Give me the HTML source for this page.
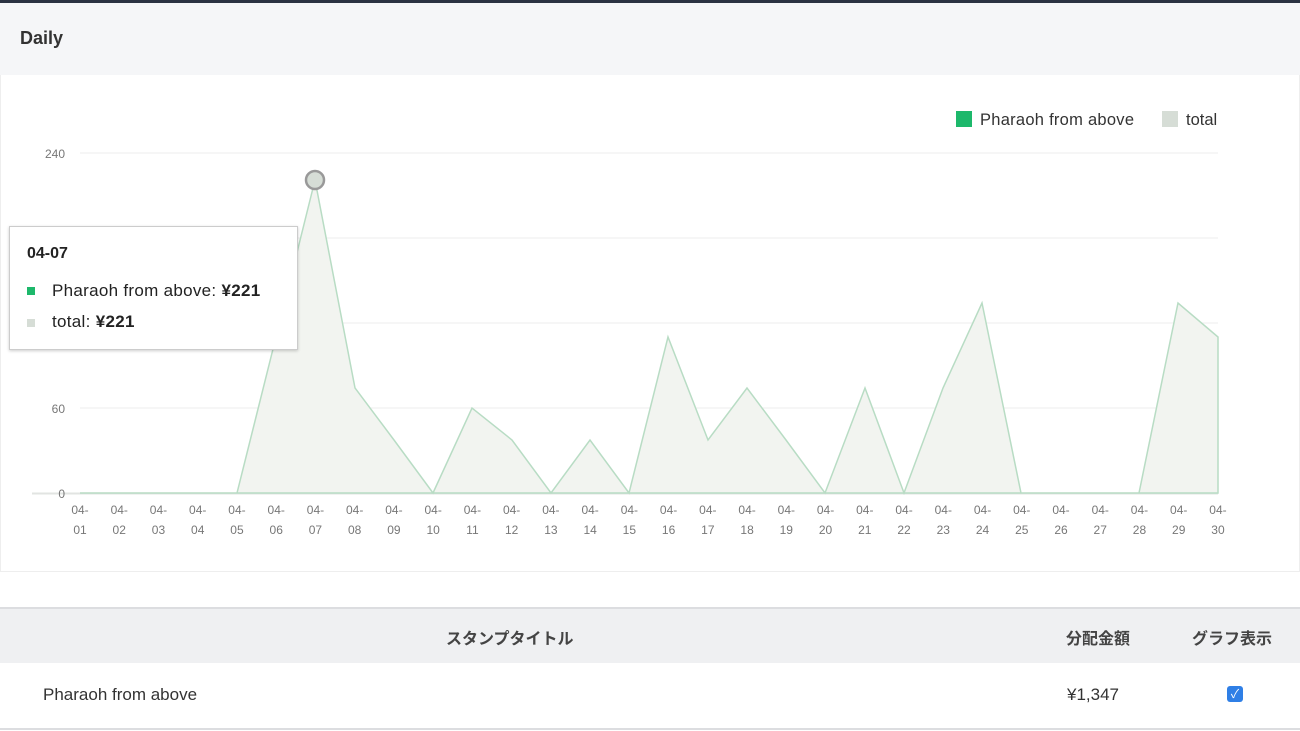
<!DOCTYPE html>
<html><head><meta charset="utf-8"><style>
body{margin:0;width:1300px;height:731px;overflow:hidden;background:#fff;font-family:"Liberation Sans","Noto Sans CJK JP",sans-serif;position:relative}
.top{position:absolute;left:0;top:0;width:1300px;height:3px;background:#2b3242}
.hdr{position:absolute;left:0;top:3px;width:1300px;height:72px;background:#f5f6f8}
.hdr span{position:absolute;left:20px;top:25px;font-size:18px;font-weight:bold;color:#333}
.panel{position:absolute;left:0;top:75px;width:1298px;height:496px;border:1px solid #eee;border-top:none;background:#fff}
.tip{position:absolute;left:9px;top:226px;width:287px;height:122px;background:#fff;border:1px solid #ccc;box-shadow:0 1px 3px rgba(0,0,0,.2);font-size:17px;color:#222}
.th{position:absolute;left:0;top:607px;width:1300px;height:54px;background:#eff0f2;border-top:2px solid #dcdde0}
.row{position:absolute;left:0;top:662px;width:1300px;height:66px;border-bottom:2px solid #dcdde0}
</style></head><body>
<div class="top"></div>
<div class="hdr"><span>Daily</span></div>
<div class="panel"></div>
<svg style="position:absolute;left:0;top:0" width="1300" height="600" font-family="Liberation Sans, sans-serif">
<g stroke="#eee" stroke-width="1">
<line x1="80" y1="153" x2="1218" y2="153"/><line x1="80" y1="238" x2="1218" y2="238"/><line x1="80" y1="323" x2="1218" y2="323"/><line x1="80" y1="408" x2="1218" y2="408"/>
</g>
<line x1="32" y1="493.5" x2="1218" y2="493.5" stroke="#e2e4e2" stroke-width="2"/>
<g font-size="12" fill="#777" text-anchor="end">
<text x="65" y="158">240</text><text x="65" y="413">60</text><text x="65" y="498">0</text>
</g>
<polygon fill="#f2f4f0" stroke="#b8dcc4" stroke-width="1.5" points="80,493 119,493 159,493 198,493 237,493 276,337 315,180 355,388 394,440 433,493 472,408 512,440 551,493 590,440 629,493 668,337 708,440 747,388 786,440 825,493 865,388 904,493 943,388 982,303 1021,493 1061,493 1100,493 1139,493 1178,303 1218,337 1218,493"/>
<circle cx="315" cy="180" r="9" fill="#d6ddd6" stroke="#999" stroke-width="2.5"/>
<g font-size="12" fill="#777" text-anchor="middle" id="xl"></g>
<rect x="956" y="111" width="16" height="16" fill="#1db86b"/>
<text x="980" y="125" font-size="16.5" fill="#333" textLength="154">Pharaoh from above</text>
<rect x="1162" y="111" width="16" height="16" fill="#d6ddd6"/>
<text x="1186" y="125" font-size="16.5" fill="#333">total</text>
</svg>
<div class="tip">
<div style="position:absolute;left:17px;top:18px;font-weight:bold;font-size:16px">04-07</div>
<div style="position:absolute;left:17px;top:60px;width:8px;height:8px;background:#1db86b"></div>
<div style="position:absolute;left:42px;top:54px;letter-spacing:0.3px">Pharaoh from above: <b>¥221</b></div>
<div style="position:absolute;left:17px;top:92px;width:8px;height:8px;background:#d6ddd6"></div>
<div style="position:absolute;left:42px;top:85px;letter-spacing:0.3px">total: <b>¥221</b></div>
</div>
<div class="th">
<span style="position:absolute;left:446px;top:16px;font-size:16px;font-weight:bold;color:#444">スタンプタイトル</span>
<span style="position:absolute;left:1066px;top:16px;font-size:16px;font-weight:bold;color:#444">分配金額</span>
<span style="position:absolute;left:1192px;top:16px;font-size:16px;font-weight:bold;color:#444">グラフ表示</span>
</div>
<div class="row">
<span style="position:absolute;left:43px;top:23px;font-size:17px;color:#333">Pharaoh from above</span>
<span style="position:absolute;left:1067px;top:23px;font-size:17px;color:#333">¥1,347</span>
<div style="position:absolute;left:1227px;top:24px;width:16px;height:16px;border-radius:3px;background:#2f7fe6;color:#fff;font-size:12px;text-align:center;line-height:16px">✓</div>
</div>
<script>
var g=document.getElementById('xl'),s='';
for(var i=1;i<=30;i++){var x=80+(i-1)*39.24;var d=(i<10?'0':'')+i;
s+='<text x="'+x+'" y="514">04-</text><text x="'+x+'" y="534">'+d+'</text>';}
g.innerHTML=s;
</script>
</body></html>
